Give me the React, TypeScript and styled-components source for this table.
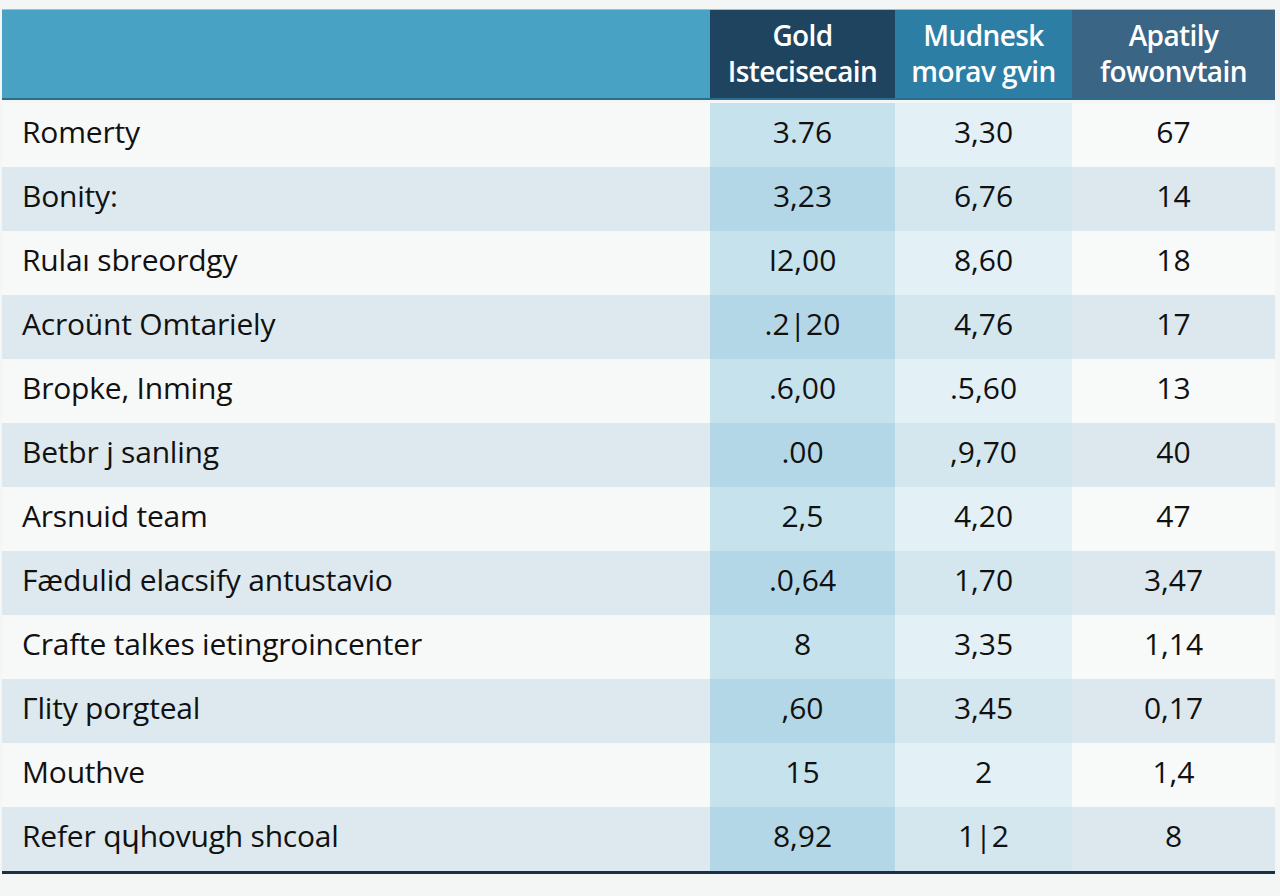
import React from "react";
import styled, { createGlobalStyle } from "styled-components";

const Global = createGlobalStyle`
  html, body { margin: 0; padding: 0; background: #f4f6f6; }
  body { font-family: "Open Sans", "Noto Sans", sans-serif; }
`;

const Page = styled.div`
  width: 1280px;
  height: 896px;
  padding: 9px 5px 0 2px;
  box-sizing: border-box;
  background: #f4f6f6;
`;

const cols = "708px 185px 177px 203px";

const HeaderRow = styled.div`
  display: grid;
  grid-template-columns: ${cols};
  height: 91px;
  border-top: 1px solid #8cc6dc;
  border-bottom: 2px solid #2a6d8c;
  box-sizing: border-box;
`;

const HeadCell = styled.div<{ $bg: string }>`
  background: ${(p) => p.$bg};
  color: #ffffff;
  display: flex;
  flex-direction: column;
  align-items: center;
  justify-content: center;
  font-size: 28px;
  font-weight: 600;
  line-height: 36px;
  letter-spacing: -0.6px;
  text-align: center;
  padding-bottom: 2px;
`;

const Body = styled.div`
  margin-top: 3px;
  border-bottom: 3px solid #1b3044;
`;

const Row = styled.div<{ $alt: boolean }>`
  display: grid;
  grid-template-columns: ${cols};
  height: 64px;
  background: ${(p) => (p.$alt ? "#dde9ef" : "#f7f8f8")};
`;

const LabelCell = styled.div`
  display: flex;
  align-items: center;
  padding-left: 20px;
  padding-bottom: 7px;
  font-size: 30px;
  color: #111111;
  letter-spacing: -0.2px;
`;

const NumCell = styled.div<{ $bg: string }>`
  display: flex;
  align-items: center;
  justify-content: center;
  padding-bottom: 7px;
  font-size: 30px;
  color: #111111;
  background: ${(p) => p.$bg};
`;

const rows: [string, string, string, string][] = [
  ["Romerty", "3.76", "3,30", "67"],
  ["Bonity:", "3,23", "6,76", "14"],
  ["Rulaı sbreordgy", "I2,00", "8,60", "18"],
  ["Acroünt Omtariely", ".2|20", "4,76", "17"],
  ["Bropke, Inming", ".6,00", ".5,60", "13"],
  ["Betbr j sanling", ".00", ",9,70", "40"],
  ["Arsnuid team", "2,5", "4,20", "47"],
  ["Fædulid elacsify antustavio", ".0,64", "1,70", "3,47"],
  ["Crafte talkes ietingroincenter", "8", "3,35", "1,14"],
  ["Гlity porgteal", ",60", "3,45", "0,17"],
  ["Mouthve", "15", "2", "1,4"],
  ["Refer qɥhovugh shcoal", "8,92", "1|2", "8"],
];

export default function App() {
  return (
    <>
      <Global />
      <Page>
        <HeaderRow>
          <HeadCell $bg="#48a2c4" />
          <HeadCell $bg="#1f4460">
            <span>Gold</span>
            <span>Istecisecain</span>
          </HeadCell>
          <HeadCell $bg="#2d7ea5">
            <span>Mudnesk</span>
            <span>morav gvin</span>
          </HeadCell>
          <HeadCell $bg="#3b6585">
            <span>Apatily</span>
            <span>fowonvtain</span>
          </HeadCell>
        </HeaderRow>
        <Body>
          {rows.map((r, i) => {
            const alt = i % 2 === 1;
            return (
              <Row key={i} $alt={alt}>
                <LabelCell>{r[0]}</LabelCell>
                <NumCell $bg={alt ? "#b3d7e6" : "#c6e2ed"}>{r[1]}</NumCell>
                <NumCell $bg={alt ? "#d4e7ef" : "#e3f0f5"}>{r[2]}</NumCell>
                <NumCell $bg={alt ? "#dde8ee" : "#f8f9f9"}>{r[3]}</NumCell>
              </Row>
            );
          })}
        </Body>
      </Page>
    </>
  );
}
